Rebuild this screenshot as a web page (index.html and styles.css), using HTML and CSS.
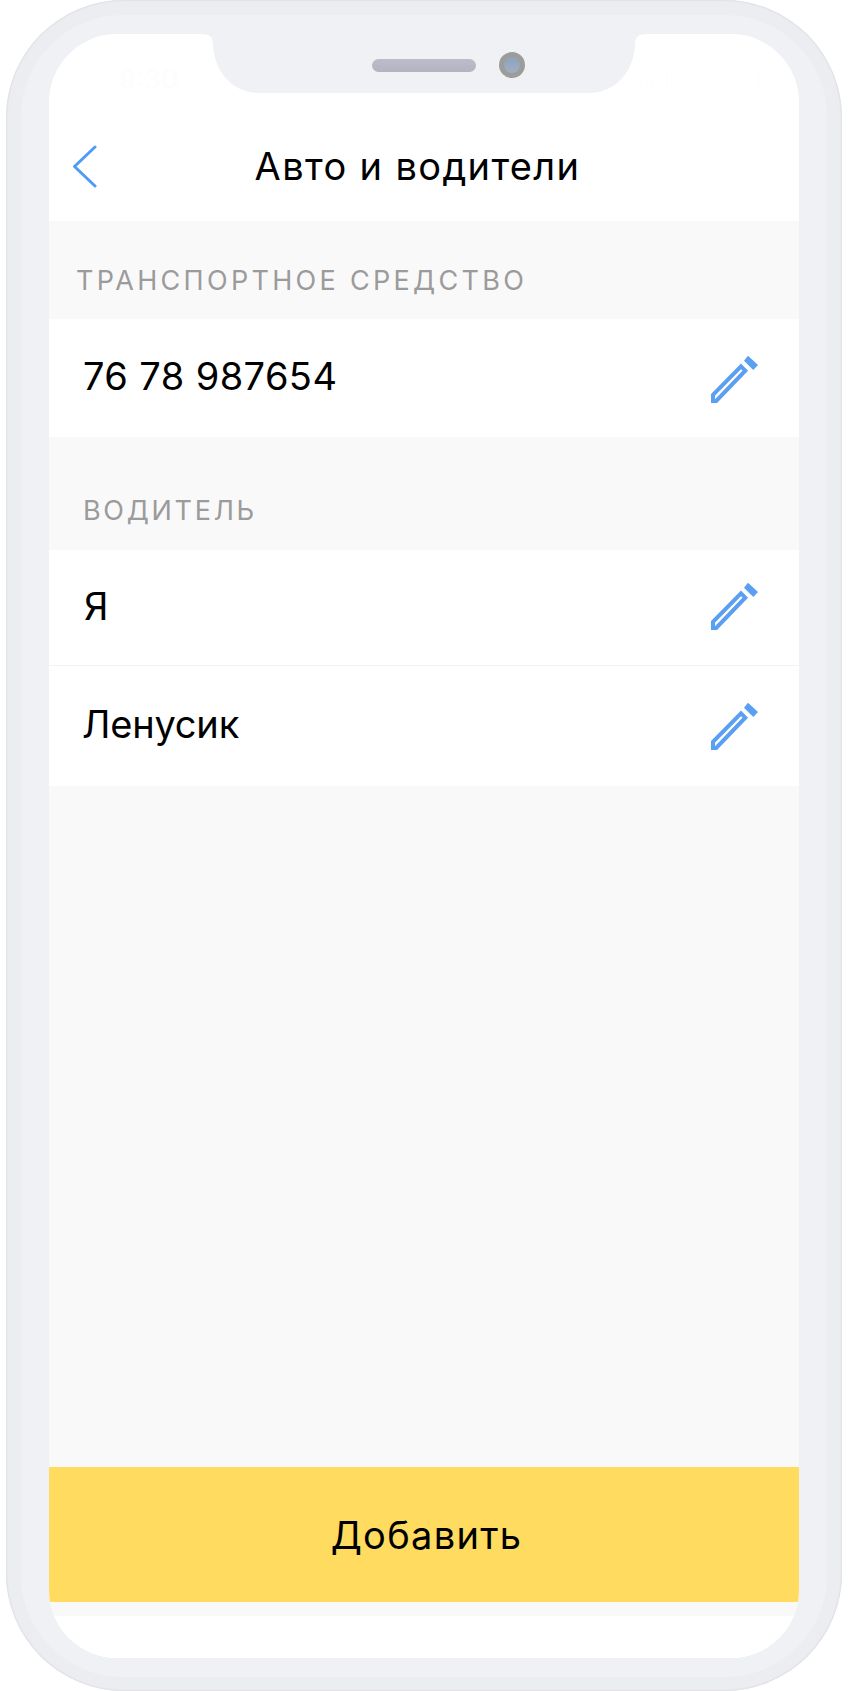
FILE: index.html
```html
<!DOCTYPE html>
<html lang="ru">
<head>
    <meta charset="UTF-8">
    <meta name="viewport" content="width=device-width, initial-scale=1.0">
    <title>Авто и водители</title>
    <link rel="stylesheet" href="styles.css">
</head>
<body>
    <svg class="icon-defs" width="0" height="0">
        <symbol id="pencil" viewBox="0 0 50 50">
            <path d="M31 12.300 35.300 16.700 6.200 47H3V40.800Z" fill="none" stroke="#5a9ff2" stroke-width="4"/>
            <path d="M38 1.700 48 11 43.300 16 34 6.700Z" fill="#5a9ff2"/>
        </symbol>
    </svg>

    <div class="phone">
        <div class="bezel">
            <div class="screen">
                <div class="status">
                    <span class="time">9:30</span>
                    <svg class="status-icons" viewBox="0 0 130 24" width="130" height="24">
                        <path d="M2 20h5v3H2zM12 15h5v8h-5zM22 10h5v13h-5zM32 4h5v19h-5zM53 8c9-7 20-7 29 0M58 13c6-4 13-4 19 0M63 18c3-2 6-2 9 0M88 3h36v19H88z" fill="none" stroke="#fdfdfd" stroke-width="1"/>
                    </svg>
                </div>
                <header class="topbar">
                    <svg class="back" viewBox="0 0 26 44" width="26" height="44">
                        <path d="M23 2 2.500 21.500 23 41" fill="none" stroke="#4f9bf5" stroke-width="3" stroke-linecap="round" stroke-linejoin="round"/>
                    </svg>
                    <h1 class="title">Авто и водители</h1>
                </header>

                <div class="section-label first">ТРАНСПОРТНОЕ СРЕДСТВО</div>
                <div class="row row-car">
                    <span class="row-text plate">76 78 987654</span>
                    <svg class="edit"><use href="#pencil"/></svg>
                </div>

                <div class="section-label second">ВОДИТЕЛЬ</div>
                <div class="row row-me">
                    <span class="row-text">Я</span>
                    <svg class="edit"><use href="#pencil"/></svg>
                </div>
                <div class="row row-lena">
                    <span class="row-text">Ленусик</span>
                    <svg class="edit"><use href="#pencil"/></svg>
                </div>

                <div class="spacer"></div>
                <button class="add-btn">Добавить</button>
                <div class="bottom-strip"></div>
                <div class="home-area"></div>
            </div>

            <svg class="notch" viewBox="0 0 444 60" width="444" height="60">
                <path d="M0 0H444C435 0 433 4 433 12 431 38 414 59 386 59H58C30 59 13 38 11 12 11 4 9 0 0 0Z" fill="#f0f1f4"/>
            </svg>
            <div class="speaker"></div>
            <div class="camera"></div>
        </div>
    </div>
</body>
</html>
```

FILE: styles.css
```css
* {
    margin: 0;
    padding: 0;
    box-sizing: border-box;
}

body {
    background: #fff;
    font-family: "Inter", "Liberation Sans", sans-serif;
    color: #000;
}

.icon-defs {
    position: absolute;
}

.phone {
    width: 836px;
    height: 1691px;
    margin-left: 6px;
    padding: 15px 15px 14px;
    background: #ecedf1;
    border-radius: 118px;
    box-shadow: inset 0 0 2px #c4c6cc;
}

.bezel {
    position: relative;
    height: 100%;
    padding: 19px 28px;
    background: #f0f1f4;
    border-radius: 102px;
}

.screen {
    display: flex;
    flex-direction: column;
    height: 100%;
    background: #fff;
    border-radius: 68px;
    overflow: hidden;
}

.status {
    height: 68px;
    flex: none;
    display: flex;
    justify-content: space-between;
    align-items: flex-start;
    padding: 32px 34px 0 70px;
}

.time {
    font-size: 27px;
    line-height: 27px;
    font-weight: 500;
    color: #fdfdfd;
}

.topbar {
    position: relative;
    height: 119px;
    flex: none;
    display: flex;
    align-items: center;
    justify-content: center;
    padding: 9px 13px 0 0;
}

.back {
    position: absolute;
    left: 23px;
    top: 43px;
}

.title {
    font-size: 38px;
    font-weight: 400;
    letter-spacing: 1.35px;
}

.section-label {
    flex: none;
    display: flex;
    align-items: flex-end;
    background: #f9f9fa;
    color: #9b9b9b;
    font-size: 27px;
}

.section-label.first {
    height: 98px;
    padding: 0 0 22px 27px;
    letter-spacing: 3.3px;
}

.section-label.second {
    height: 113px;
    padding: 0 0 23px 34px;
    letter-spacing: 2.7px;
}

.row {
    flex: none;
    display: flex;
    align-items: center;
    justify-content: space-between;
    background: #fff;
    padding: 0 39px 4px 34px;
}

.row-car {
    height: 118px;
}

.row-me {
    height: 116px;
    padding-left: 35px;
    border-bottom: 1px solid #f3f3f4;
}

.row-lena {
    height: 120px;
    padding-left: 33px;
}

.row-text {
    font-size: 38px;
}

.plate {
    letter-spacing: 0.4px;
}

.row-lena .row-text {
    letter-spacing: -0.2px;
}

.edit {
    width: 50px;
    height: 50px;
    flex: none;
}

.row-car .edit {
    margin-top: 5px;
}

.row-me .edit {
    margin-top: 1px;
}

.row-lena .edit {
    margin-top: 3px;
}

.spacer {
    flex: 1;
    background: #f9f9fa;
}

.add-btn {
    flex: none;
    height: 135px;
    padding-left: 5px;
    border: none;
    background: #ffdb60;
    font: inherit;
    font-size: 38px;
    letter-spacing: 1.3px;
    color: #000;
    cursor: pointer;
}

.bottom-strip {
    height: 14px;
    flex: none;
    background: #f9f9fa;
}

.home-area {
    height: 42px;
    flex: none;
    background: #fff;
}

.notch {
    position: absolute;
    left: 181px;
    top: 19px;
}

.speaker {
    position: absolute;
    left: 351px;
    top: 44px;
    width: 104px;
    height: 13px;
    border-radius: 7px;
    background: linear-gradient(#bcbccb, #b3b3c2);
}

.camera {
    position: absolute;
    left: 478px;
    top: 37px;
    width: 26px;
    height: 26px;
    border-radius: 50%;
    border: 5px solid #9c9c9c;
    background: linear-gradient(#8ea2bd, #a1aebf);
}
```
